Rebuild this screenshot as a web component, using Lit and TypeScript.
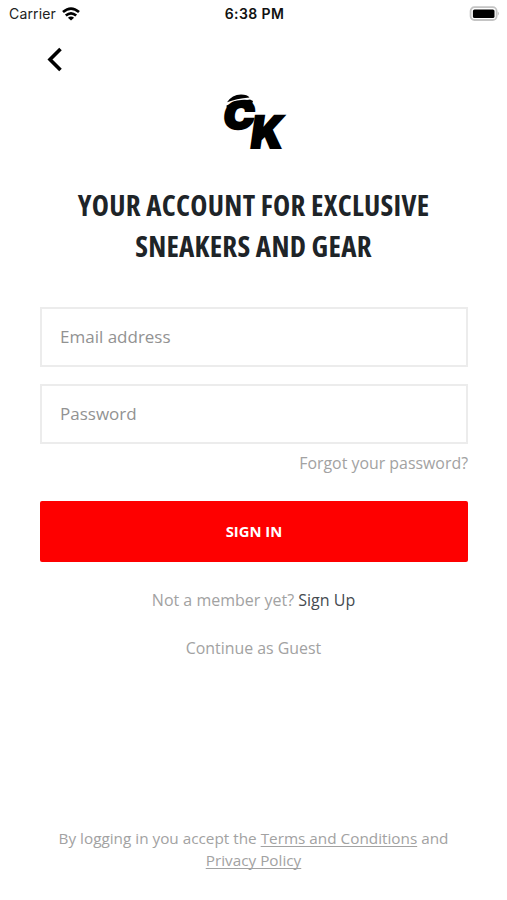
import { LitElement, html, css } from "lit";
import { customElement, property } from "lit/decorators.js";

@customElement("status-bar")
class StatusBar extends LitElement {
  static styles = css`
    :host { display: grid; grid-template-columns: 1fr auto 1fr; align-items: center; height: 27px; padding: 0 7px 0 9px; box-sizing: border-box; font-family: Inter, sans-serif; font-size: 14px; color: #222; }
    .carrier { display: flex; align-items: center; gap: 6px; letter-spacing: 0.15px; }
    .time { font-weight: 600; letter-spacing: 0.42px; color: #111; }
    .battery { justify-self: end; display: block; }
    .wifi { display: block; }
  `;
  render() {
    return html`
      <div class="carrier"><span>Carrier</span>
        <svg class="wifi" width="18" height="14" viewBox="0 0 18 14">
          <g fill="none" stroke="#000" stroke-width="2.7">
            <path d="M1 5.1Q9 -1.8 17 5.1" />
            <path d="M3.8 8.5Q9 4.2 14.2 8.5" />
          </g>
          <path d="M9 13.5L5.9 10.7Q9 8.3 12.1 10.7Z" />
        </svg>
      </div>
      <div class="time">6:38 PM</div>
      <svg class="battery" width="31" height="16" viewBox="0 0 31 16">
        <rect x="1.6" y="1.2" width="26" height="12.8" rx="3.8" fill="#fff" stroke="#c4c4c4" stroke-width="1.8" />
        <rect x="3.9" y="3.5" width="21.6" height="8.6" rx="1.6" />
        <path d="M28.8 5.5q2.2 2 0 4.2z" fill="#bbb" />
      </svg>
    `;
  }
}

@customElement("brand-logo")
class BrandLogo extends LitElement {
  static styles = css`
    :host { display: block; width: 64px; height: 60px; }
    .mark { display: block; overflow: visible; }
    .letter { font-family: Inter, sans-serif; font-weight: 900; stroke: #000; stroke-width: 2; }
  `;
  render() {
    return html`
      <svg class="mark" width="64" height="60" viewBox="0 0 64 60">
        <g transform="translate(0.2 36.4) skewX(-7)"><text class="letter" x="0" y="0" font-size="39" textLength="31" lengthAdjust="spacingAndGlyphs">C</text></g>
        <path d="M4.5 12.5Q14 7.8 28 6.4L31 8L30 11L18 15L5 16Z" />
        <path d="M2 11.2Q14 6.6 31 5.8V0H2Z" fill="#fff" />
        <path d="M5 9.2Q10 1.6 19 1.4Q25.5 1.6 27.5 4.4Q14 5.6 5 9.2Z" />
        <g transform="translate(27.2 55.4) skewX(-8)"><text class="letter" x="0" y="0" font-size="44.5" textLength="32" lengthAdjust="spacingAndGlyphs">K</text></g>
      </svg>
    `;
  }
}

@customElement("text-field")
class TextField extends LitElement {
  @property() label = "";
  @property() type = "text";
  static styles = css`
    :host { display: block; }
    .input { display: block; width: 100%; height: 60px; box-sizing: border-box; padding: 0 18px 2px; border: 2px solid #ececec; background: #fff; outline: 0; font: 17px "Open Sans", sans-serif; border-radius: 0; color: #222; }
    .input::placeholder { color: #929292; opacity: 1; }
  `;
  render() {
    return html`<input class="input" type=${this.type} placeholder=${this.label} aria-label=${this.label} />`;
  }
}

@customElement("app-root")
class AppRoot extends LitElement {
  static styles = css`
    :host { display: flex; flex-direction: column; height: 900px; background: #fff; font-family: "Open Sans", sans-serif; color: #a2a2a2; overflow: hidden; }
    .back { align-self: flex-start; margin: 19px 0 0 47px; padding: 0; border: 0; background: none; height: 26px; }
    .icon { display: block; }
    .logo { align-self: center; margin-top: 21px; }
    .title { margin: 32px 0 0; text-align: center; color: #1e2428; font-weight: 660; font-stretch: 75%; font-size: 29px; letter-spacing: 0.26px; line-height: 40.5px; }
    .line { display: block; }
    .form { display: flex; flex-direction: column; gap: 17px; margin: 41px 39px 0 40px; }
    .forgot { align-self: flex-end; margin-top: -9px; font-size: 15.9px; line-height: 22px; }
    .submit { height: 61px; margin-top: 10px; padding-bottom: 3px; border: 0; border-radius: 2px; background: #fe0000; color: #fff; font: 700 14.8px "Open Sans", sans-serif; }
    .member { margin-top: 27px; text-align: center; font-size: 16px; line-height: 22px; }
    .signup { color: #454b50; }
    .guest { margin-top: 26px; text-align: center; font-size: 15.9px; line-height: 22px; }
    .legal { margin: auto 0 29px; text-align: center; font-size: 15.3px; line-height: 22px; }
    .link { text-decoration: underline; text-underline-offset: 2px; text-decoration-thickness: 1px; text-decoration-skip-ink: none; }
  `;
  render() {
    return html`
      <status-bar></status-bar>
      <button class="back" aria-label="Back">
        <svg class="icon" width="17" height="26" viewBox="0 0 17 26"><path d="M13.5 3L3 13.5L13.5 24" fill="none" stroke="#000" stroke-width="3.6" /></svg>
      </button>
      <brand-logo class="logo"></brand-logo>
      <h1 class="title"><span class="line">YOUR ACCOUNT FOR EXCLUSIVE</span><span class="line">SNEAKERS AND GEAR</span></h1>
      <div class="form">
        <text-field label="Email address"></text-field>
        <text-field label="Password" type="password"></text-field>
        <span class="forgot">Forgot your password?</span>
        <button class="submit">SIGN IN</button>
      </div>
      <div class="member">Not a member yet? <span class="signup">Sign Up</span></div>
      <div class="guest">Continue as Guest</div>
      <div class="legal">
        <span class="line">By logging in you accept the <span class="link">Terms and Conditions</span> and</span>
        <span class="line"><span class="link">Privacy Policy</span></span>
      </div>
    `;
  }
}
